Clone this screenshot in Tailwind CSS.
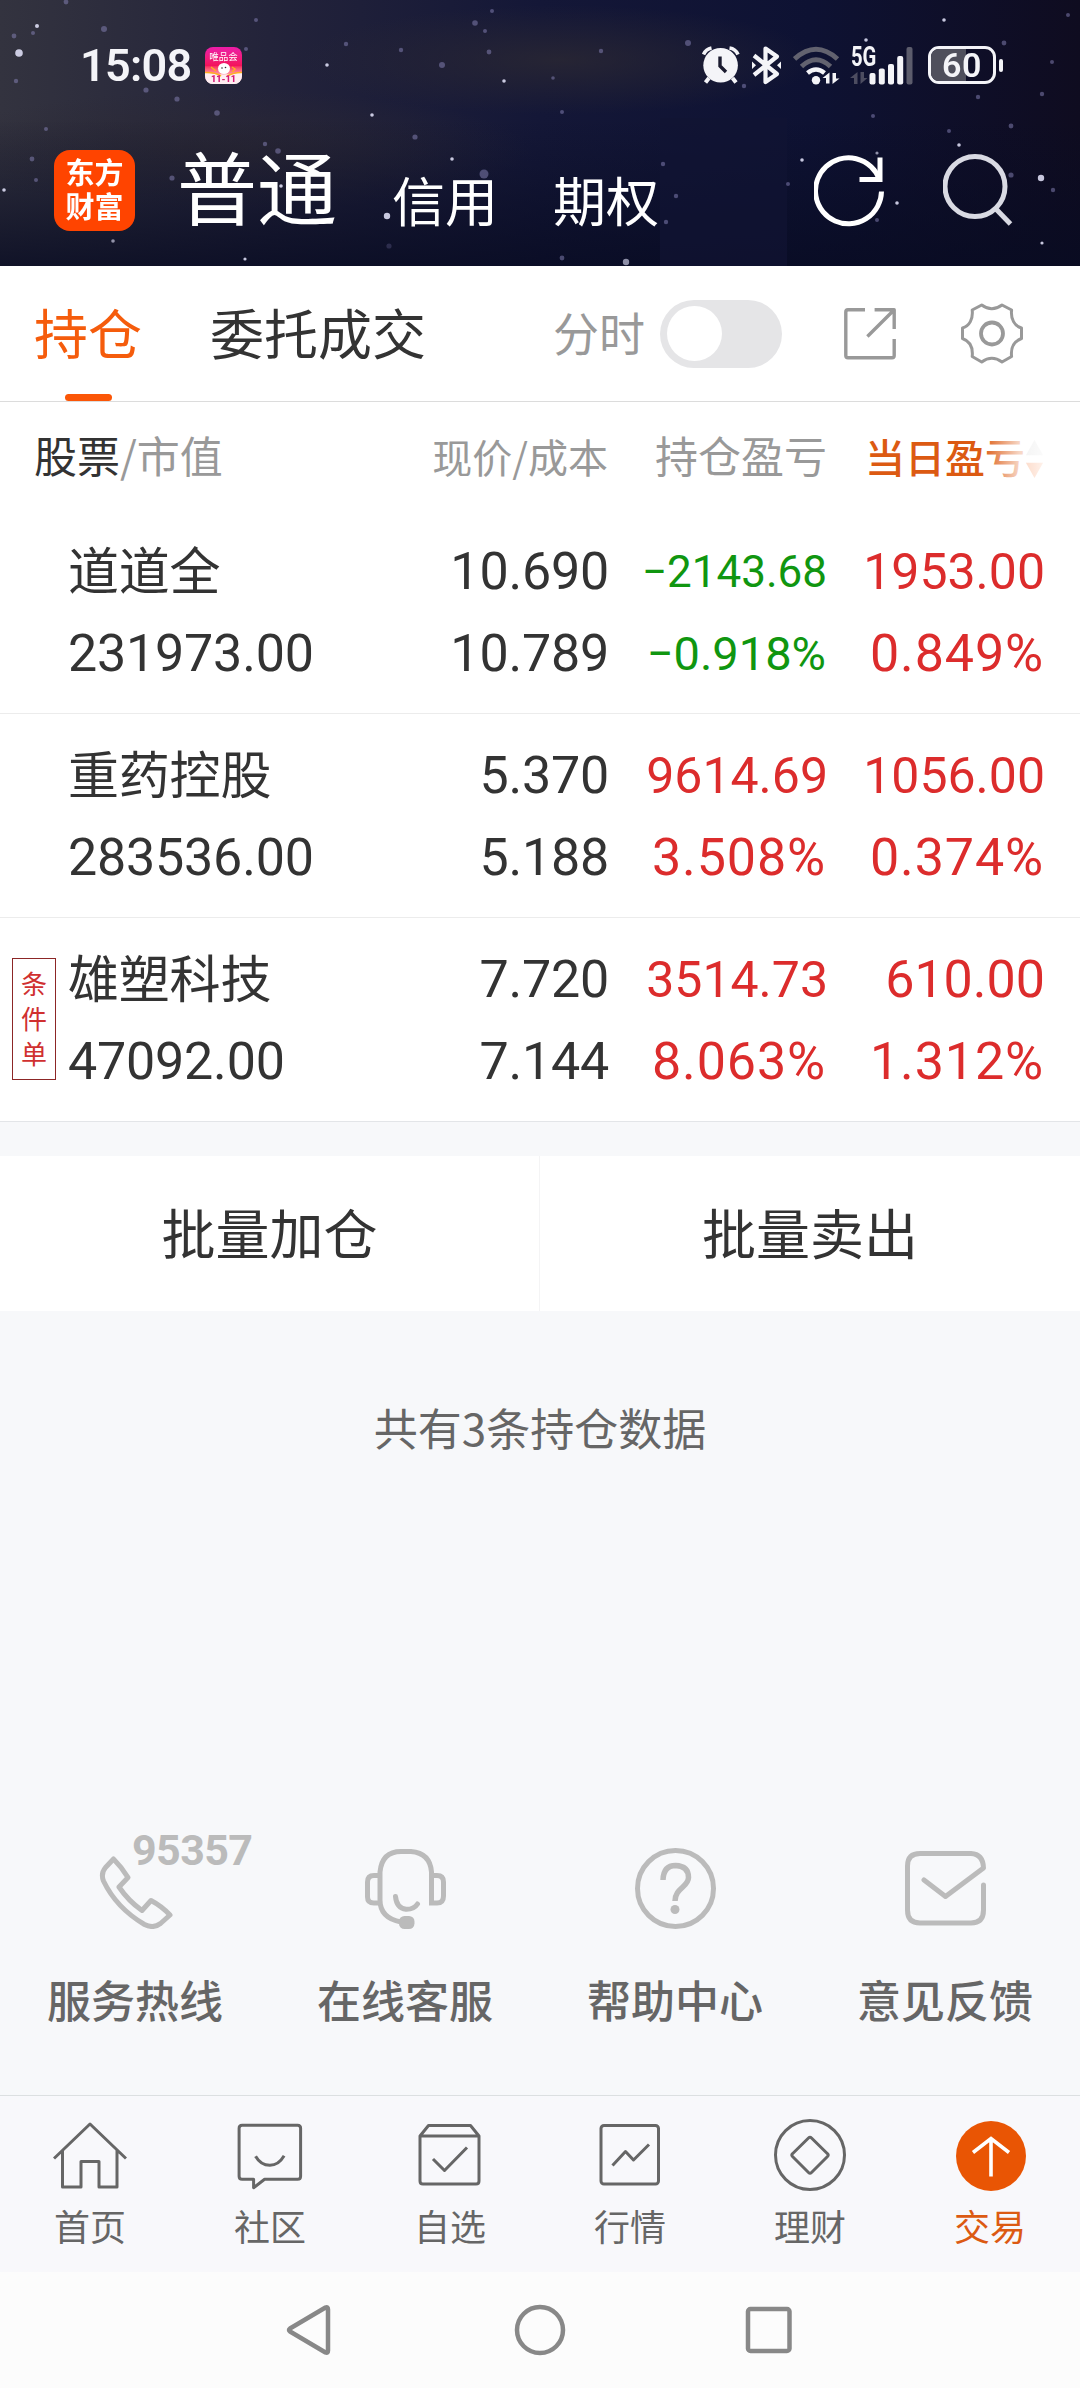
<!DOCTYPE html>
<html lang="zh-CN">
<head>
    <meta charset="UTF-8">
    <meta name="viewport" content="width=device-width, initial-scale=1.0">
    <title>持仓 - 东方财富</title>
    <script src="https://cdn.jsdelivr.net/npm/@tailwindcss/browser@4"></script>
</head>
<body class="w-[1080px] h-[2388px] bg-[#f7f8fa] text-[#333] font-['Noto_Sans_CJK_SC',sans-serif] overflow-hidden flex flex-col">

    <!-- Header -->
    <header class="relative h-[266px] shrink-0 overflow-hidden bg-[#12142c] text-white">
        <!-- Night sky -->
        <svg class="absolute inset-0" width="1080" height="266" viewBox="0 0 1080 266">
            <defs>
                <linearGradient id="sky" x1="0" y1="0" x2="1" y2="0">
                    <stop offset="0" stop-color="#33333f"/>
                    <stop offset="0.25" stop-color="#23233a"/>
                    <stop offset="0.5" stop-color="#141737"/>
                    <stop offset="0.75" stop-color="#0e1233"/>
                    <stop offset="1" stop-color="#0f0c20"/>
                </linearGradient>
                <linearGradient id="fade" x1="0" y1="0" x2="0" y2="1">
                    <stop offset="0.45" stop-color="#080b22" stop-opacity="0"/>
                    <stop offset="1" stop-color="#080b22" stop-opacity="0.8"/>
                </linearGradient>
                <radialGradient id="haze">
                    <stop offset="0" stop-color="#2b2833" stop-opacity="0.8"/>
                    <stop offset="1" stop-color="#2b2833" stop-opacity="0"/>
                </radialGradient>
            </defs>
            <rect width="1080" height="266" fill="url(#sky)"/>
            <ellipse cx="560" cy="60" rx="260" ry="55" fill="url(#haze)"/>
            <ellipse cx="230" cy="150" rx="300" ry="60" fill="url(#haze)"/>
            <rect width="1080" height="266" fill="url(#fade)"/>
            <rect x="660" y="118" width="127" height="148" fill="#111433" opacity="0.7"/>
            <g fill="#e8e8ff" opacity="0.85">
                <circle cx="19" cy="53" r="3.8"/><circle cx="37" cy="26" r="2"/><circle cx="327" cy="65" r="1.8"/><circle cx="372" cy="115" r="1.8"/>
                <circle cx="504" cy="81" r="1.8"/><circle cx="452" cy="159" r="1.8"/><circle cx="387" cy="216" r="3.2"/><circle cx="4" cy="190" r="1.8"/>
                <circle cx="245" cy="259" r="1.6"/><circle cx="281" cy="186" r="1.8"/><circle cx="944" cy="20" r="1.8"/><circle cx="866" cy="40" r="1.8"/>
                <circle cx="959" cy="145" r="1.8"/><circle cx="802" cy="160" r="1.8"/><circle cx="897" cy="203" r="1.8"/><circle cx="1041" cy="178" r="3.2"/>
                <circle cx="1042" cy="243" r="1.6"/><circle cx="626" cy="262" r="3.2" opacity="0.7"/><circle cx="113" cy="241" r="1.8" opacity="0.7"/><circle cx="877" cy="153" r="1.6" opacity="0.7"/>
            </g>
            <g fill="#8a86bb" opacity="0.5">
                <circle cx="14" cy="36" r="2.4"/><circle cx="33" cy="33" r="2"/><circle cx="66" cy="2" r="2.4"/><circle cx="104" cy="29" r="3"/>
                <circle cx="16" cy="81" r="2.2"/><circle cx="146" cy="90" r="2.6"/><circle cx="177" cy="99" r="2.6"/><circle cx="217" cy="113" r="2.8"/>
                <circle cx="46" cy="129" r="2"/><circle cx="32" cy="159" r="2.4"/><circle cx="36" cy="180" r="2"/><circle cx="172" cy="178" r="2.6"/>
                <circle cx="265" cy="144" r="2.2"/><circle cx="278" cy="151" r="2.8"/><circle cx="256" cy="20" r="2"/><circle cx="246" cy="49" r="2"/>
                <circle cx="346" cy="44" r="2.2"/><circle cx="401" cy="50" r="2.2"/><circle cx="442" cy="65" r="3"/><circle cx="475" cy="23" r="2.8"/>
                <circle cx="489" cy="52" r="2.4"/><circle cx="492" cy="11" r="2"/><circle cx="485" cy="31" r="2"/><circle cx="415" cy="137" r="2.6"/>
                <circle cx="484" cy="174" r="4.5"/><circle cx="389" cy="246" r="2.6" opacity="0.5"/><circle cx="688" cy="43" r="3"/><circle cx="601" cy="51" r="2.2"/>
                <circle cx="553" cy="78" r="1.8"/><circle cx="744" cy="86" r="2.2"/><circle cx="562" cy="112" r="2"/><circle cx="663" cy="164" r="2.2"/>
                <circle cx="676" cy="196" r="2.2"/><circle cx="666" cy="222" r="2.2"/><circle cx="562" cy="258" r="2.4"/><circle cx="873" cy="116" r="2"/>
                <circle cx="1004" cy="43" r="2.4"/><circle cx="1052" cy="62" r="2"/><circle cx="978" cy="97" r="2.2"/><circle cx="1042" cy="94" r="2.2"/>
                <circle cx="1011" cy="126" r="2.4"/><circle cx="1011" cy="175" r="2.6"/><circle cx="1053" cy="190" r="2.2"/><circle cx="1068" cy="15" r="2"/>
                <circle cx="877" cy="220" r="2"/><circle cx="949" cy="131" r="2"/><circle cx="788" cy="184" r="2"/>
            </g>
        </svg>

        <!-- Status bar -->
        <div class="relative h-[130px] flex items-center pl-[80px] pr-[77px] text-[#f4f4f8]">
            <span class="font-['Roboto'] font-semibold text-[45px] leading-none tracking-[-0.7px] w-[125px]">15:08</span>
            <div class="relative w-[37px] h-[37px] mt-[1px] rounded-[8px] overflow-hidden bg-linear-to-b from-[#ec1ca8] via-[#f4125c] to-[#fff0f4] flex flex-col items-center">
                <span class="text-[9.5px] leading-[10px] mt-[4px] text-white whitespace-nowrap">唯品会</span>
                <svg class="absolute left-0 top-[14px]" width="37" height="23" viewBox="0 0 37 23">
                    <path d="M0 11Q18 16 37 11V23H0Z" fill="#ffeef2"/>
                    <path d="M0 11.5Q10 11 16 15M37 11.5Q30 11 22 15" stroke="#ffb020" stroke-width="1.6" fill="none"/>
                    <ellipse cx="19" cy="7.5" rx="6" ry="5.5" fill="#fff"/>
                    <circle cx="17" cy="7" r="0.8" fill="#333"/><circle cx="20.5" cy="6.5" r="0.8" fill="#333"/>
                    <path d="M6 6l5 4M27 6l3 2-3 3" stroke="#ffb020" stroke-width="1.5" fill="none"/>
                </svg>
                <span class="absolute bottom-0 text-[9px] leading-[9px] font-['Roboto'] font-black text-[#d61a78]">11-11</span>
            </div>
            <div class="ml-auto flex items-center">
                <!-- alarm -->
                <svg width="38" height="39" viewBox="0 0 38 39" fill="none">
                    <circle cx="18.6" cy="19.3" r="17.3" fill="#f4f4f8"/>
                    <path d="M1.5 8.5A11 11 0 0 1 9.5 2M27.5 2a11 11 0 0 1 8.5 6.5" stroke="#f4f4f8" stroke-width="3.6"/>
                    <path d="M7 32l-3.5 4.5M30.5 32l3.5 4.5" stroke="#f4f4f8" stroke-width="4"/>
                    <path d="M18 10.5v9.5l6 6" stroke="#1b1b30" stroke-width="3.4"/>
                </svg>
                <!-- bluetooth -->
                <svg class="ml-[12px]" width="30" height="39" viewBox="0 0 30 39" fill="none" stroke="#f4f4f8" stroke-width="4.2" stroke-linejoin="round">
                    <path d="M2 9.5L25 28 13.5 36V2.5L25 10.5 2 29"/>
                    <path d="M0 15.5l4 3.7-4 3.8zM29 15.5l-4 3.7 4 3.8z" fill="#f4f4f8" stroke="none"/>
                </svg>
                <!-- wifi -->
                <svg class="ml-[11px]" width="48" height="39" viewBox="0 0 48 39" fill="none">
                    <path d="M1.5 13Q23 -6.500 44.5 13" stroke="#62626f" stroke-width="5"/>
                    <path d="M8.5 20.5Q23 7 37.5 20.5" stroke="#62626f" stroke-width="5"/>
                    <path d="M14.5 27Q23 20 31.5 27" stroke="#f4f4f8" stroke-width="4.5"/>
                    <circle cx="23" cy="34.3" r="4.2" fill="#f4f4f8"/>
                    <path d="M36.5 26.5v11h-3.500v-5.500h-3.500zM39.5 38v-11h3.500v5.500h3.500z" fill="#f4f4f8"/>
                </svg>
                <!-- signal -->
                <div class="relative ml-[9px] w-[64px] h-[39px]">
                    <span class="absolute left-[1px] top-[-3px] font-['Roboto'] font-bold text-[27px] leading-[28px] origin-left scale-x-75">5G</span>
                    <svg class="absolute inset-0" width="64" height="39" viewBox="0 0 64 39">
                        <path d="M7.5 26v12H4v-6H0zM10.5 38V26H14v6h3.500z" fill="#4c4c60"/>
                        <g fill="#f4f4f8">
                            <rect x="19.5" y="27" width="6" height="11.5" rx="2"/>
                            <rect x="28.8" y="22.5" width="6" height="16" rx="2"/>
                            <rect x="38" y="18" width="6" height="20.5" rx="2"/>
                            <rect x="47.2" y="10" width="6" height="28.5" rx="2"/>
                        </g>
                        <rect x="56.5" y="1" width="6" height="37.5" rx="2" fill="#5c5c6c"/>
                    </svg>
                </div>
                <!-- battery -->
                <div class="relative ml-[14px] w-[68px] h-[38px] rounded-[11px] border-[3.5px] border-[#f4f4f8] overflow-hidden flex items-center justify-center">
                    <div class="absolute left-0 top-0 w-[35px] h-full bg-[#4f4f5c]"></div>
                    <span class="relative font-['Roboto'] font-semibold text-[34px] leading-none tracking-[0.5px]">60</span>
                </div>
                <div class="ml-[3px] w-[4px] h-[13px] rounded-[2px] bg-[#f4f4f8]"></div>
            </div>
        </div>

        <!-- Account tabs -->
        <div class="relative h-[120px] flex items-center pl-[54px] pr-[67px]">
            <div class="w-[81px] h-[81px] rounded-[16px] bg-[#ff4400] flex items-center justify-center text-[29px] leading-[34px] font-bold">
                <div class="mt-[-4px]">东方<br>财富</div>
            </div>
            <span class="ml-[42px] mt-[-13px] text-[80px] leading-none">普通</span>
            <span class="ml-[55px] mt-[18px] text-[53px] leading-none">信用</span>
            <span class="ml-[55px] mt-[18px] text-[53px] leading-none">期权</span>
            <svg class="ml-auto mt-[2px]" width="71" height="72" viewBox="0 0 71 72" fill="none" stroke="#fff" stroke-width="5">
                <path d="M67.5 36.5A33 33 0 1 1 65.5 24.5"/>
                <path d="M66 2.5V24.5H45.5"/>
            </svg>
            <svg class="ml-[58px]" width="70" height="72" viewBox="0 0 70 72" fill="none" stroke="#d9dae3" stroke-width="5">
                <circle cx="32" cy="32.5" r="30"/>
                <path d="M52.5 54.5L67.5 70"/>
            </svg>
        </div>
    </header>

    <!-- Page tabs -->
    <nav class="h-[136px] shrink-0 bg-white border-b border-[#dcdcdc] flex items-center pl-[34px] pr-[57px]">
        <div class="relative h-full flex items-center text-[54px] leading-none text-[#f55c0c]">
            <span class="mt-[-4px]">持仓</span>
            <div class="absolute left-[31px] bottom-0 w-[47px] h-[7px] rounded-full bg-[#fb5607]"></div>
        </div>
        <span class="ml-[68px] mt-[-4px] text-[54px] leading-none">委托成交</span>
        <span class="ml-auto mt-[-5px] text-[46px] leading-none text-[#999]">分时</span>
        <div class="ml-[15px] w-[122px] h-[68px] rounded-full bg-[#e5e5e7] flex items-center pl-[7px]">
            <div class="w-[55px] h-[55px] rounded-full bg-white"></div>
        </div>
        <svg class="ml-[62px]" width="53" height="52" viewBox="0 0 53 52" fill="none" stroke="#999" stroke-width="3.4" stroke-linejoin="round">
            <path d="M21 1.8H4Q1.8 1.8 1.8 4V47.5Q1.8 49.7 4 49.7H48Q50.2 49.7 50.2 47.5V31"/>
            <path d="M30.6 1.8H50.2V21M23.4 28.5L49.5 2.5"/>
        </svg>
        <svg class="ml-[64px]" width="62" height="61" viewBox="0 0 62 61" fill="none" stroke="#999" stroke-width="3" stroke-linejoin="round">
            <path d="M20.7 2Q30.8 9.5 41 2L50.6 7C49.5 16 53.5 23 60.5 25V35.5C53.5 38 49.5 44 50.6 53.5L41 59Q30.8 51.5 20.7 59L11.2 53.5C12.2 44 8.5 38 1.5 35.5V25C8.5 23 12.2 16 11.2 7Z"/>
            <circle cx="31" cy="30.5" r="11" stroke-width="3.8"/>
        </svg>
    </nav>

    <!-- Holdings -->
    <section class="bg-white shrink-0">
        <div class="h-[108px] grid grid-cols-[608px_219px_217px] items-center text-right leading-none text-[#999]">
            <div class="flex justify-between items-center pl-[34px]">
                <span class="text-[43px] mt-[-4px]"><span class="text-[#333]">股票</span>/市值</span>
                <span class="text-[40px]">现价/成本</span>
            </div>
            <div class="text-[43px] mt-[-4px]">持仓盈亏</div>
            <div class="relative flex items-center justify-end">
                <span class="text-[40px] font-medium text-[#dc5a12]">当日盈亏</span>
                <svg class="mt-[6px]" width="19" height="40" viewBox="0 0 20 40">
                    <path d="M10 0L19 16H1Z" fill="#ccc"/>
                    <path d="M10 40L19 24H1Z" fill="#f55c0c"/>
                </svg>
                <div class="absolute right-0 top-[-4px] w-[62px] h-[56px] bg-linear-to-r from-white/0 via-white/75 via-60% to-white/92"></div>
            </div>
        </div>

        <div class="h-[204px] grid grid-cols-[609px_219px_217px] pt-[21px] border-b border-[#ececec] font-['Roboto','Noto_Sans_CJK_SC',sans-serif] text-[52px] leading-[82px] text-right">
            <div class="pl-[68px] h-[164px] tracking-[-0.2px]">
                <div class="flex justify-between h-[82px]"><span class="text-[51px] font-['Noto_Sans_CJK_SC'] mt-[-4px]">道道全</span><span>10.690</span></div>
                <div class="flex justify-between h-[82px]"><span>231973.00</span><span>10.789</span></div>
            </div>
            <div class="text-[#109610]">
                <div class="h-[82px] text-[44px] pr-[1px]">−2143.68</div>
                <div class="h-[82px] text-[47px] pr-[2px]">−0.918%</div>
            </div>
            <div class="text-[#dc2c2c]">
                <div class="h-[82px] text-[50px]">1953.00</div>
                <div class="h-[82px] tracking-[0.9px] pr-[1px]">0.849%</div>
            </div>
        </div>

        <div class="h-[204px] grid grid-cols-[609px_219px_217px] pt-[21px] border-b border-[#ececec] font-['Roboto','Noto_Sans_CJK_SC',sans-serif] text-[52px] leading-[82px] text-right">
            <div class="pl-[68px] h-[164px] tracking-[-0.2px]">
                <div class="flex justify-between h-[82px]"><span class="text-[51px] font-['Noto_Sans_CJK_SC'] mt-[-4px]">重药控股</span><span>5.370</span></div>
                <div class="flex justify-between h-[82px]"><span>283536.00</span><span>5.188</span></div>
            </div>
            <div class="text-[#dc2c2c]">
                <div class="h-[82px] text-[50px]">9614.69</div>
                <div class="h-[82px] tracking-[0.9px] pr-[2px]">3.508%</div>
            </div>
            <div class="text-[#dc2c2c]">
                <div class="h-[82px] text-[50px]">1056.00</div>
                <div class="h-[82px] tracking-[0.9px] pr-[1px]">0.374%</div>
            </div>
        </div>

        <div class="relative h-[204px] grid grid-cols-[609px_219px_217px] pt-[21px] border-b border-[#e3e5e8] font-['Roboto','Noto_Sans_CJK_SC',sans-serif] text-[52px] leading-[82px] text-right">
            <!-- conditional order tag -->
            <div class="absolute left-[12px] top-[40px] w-[44px] h-[122px] border border-[#8c2626] flex flex-col items-center pt-[6px] font-['Noto_Sans_CJK_SC'] text-[26px] leading-[35px] text-[#d03030]">
                <span>条</span><span>件</span><span>单</span>
            </div>
            <div class="pl-[68px] h-[164px] tracking-[-0.2px]">
                <div class="flex justify-between h-[82px]"><span class="text-[51px] font-['Noto_Sans_CJK_SC'] mt-[-4px]">雄塑科技</span><span>7.720</span></div>
                <div class="flex justify-between h-[82px]"><span>47092.00</span><span>7.144</span></div>
            </div>
            <div class="text-[#dc2c2c]">
                <div class="h-[82px] text-[50px]">3514.73</div>
                <div class="h-[82px] tracking-[0.9px] pr-[2px]">8.063%</div>
            </div>
            <div class="text-[#dc2c2c]">
                <div class="h-[82px]">610.00</div>
                <div class="h-[82px] tracking-[0.9px] pr-[1px]">1.312%</div>
            </div>
        </div>
    </section>

    <!-- Batch actions -->
    <section class="mt-[34px] h-[155px] shrink-0 bg-white grid grid-cols-2 text-[54px] leading-none text-center">
        <button class="border-r border-[#f4f4f5] pb-[3px]">批量加仓</button>
        <button class="pb-[3px]">批量卖出</button>
    </section>

    <p class="mt-[94px] text-center text-[44px] leading-[44px] text-[#666]">共有3条持仓数据</p>

    <!-- Services -->
    <section class="mt-auto mb-[74px] grid grid-cols-4 text-center text-[44px] font-medium leading-none text-[#666]">
        <div class="relative flex flex-col items-center">
            <svg width="81" height="81" viewBox="-4.5 -8 81 81" fill="none" stroke="#bbb" stroke-width="5" stroke-linejoin="round">
                <path d="M14 3Q22.5 11.5 28.5 21.5L19.5 31Q29 45 42.5 54.5L51.5 44.5Q62 50 70.5 59L61 67.5Q54 73 45 68.5Q17 52 4 25Q1 17.5 6 11.5Z"/>
            </svg>
            <span class="absolute left-[132px] top-[-20px] font-['Roboto'] font-bold text-[43px] leading-[44px] tracking-[-0.6px] text-[#bbb]">95357</span>
            <span class="mt-[48px]">服务热线</span>
        </div>
        <div class="flex flex-col items-center">
            <svg width="81" height="81" viewBox="0 -1 81 81" fill="none" stroke="#bbb" stroke-width="5" stroke-linecap="round">
                <path d="M36 73Q15 69 15 51V23Q17 2.5 36 2.5H46Q65 4 66.5 23V54H72Q78.5 54 78.5 47V33Q78.5 26.5 72 26.5H68"/>
                <path d="M14 26.5H9Q2.5 26.5 2.5 33V48Q2.5 54 9 54H14"/>
                <path d="M30.5 47.5Q31.5 59 41 60.3Q49 60.5 52.5 55"/>
                <rect x="34" y="67" width="15.5" height="13" rx="5.5" fill="#bbb" stroke="none"/>
            </svg>
            <span class="mt-[48px]">在线客服</span>
        </div>
        <div class="flex flex-col items-center">
            <svg width="81" height="81" viewBox="0 0 81 81" fill="none" stroke="#bbb" stroke-width="5">
                <circle cx="40.5" cy="40.5" r="38"/>
                <path d="M28 32Q28.5 17.5 40.5 17.5Q53.5 18 53.5 29.5C53.5 39 40 40 40 53" stroke-width="5.5"/>
                <circle cx="40" cy="61.5" r="4.5" fill="#bbb" stroke="none"/>
            </svg>
            <span class="mt-[48px]">帮助中心</span>
        </div>
        <div class="flex flex-col items-center">
            <svg width="81" height="81" viewBox="0 -3 81 81" fill="none" stroke="#bbb" stroke-width="5" stroke-linecap="round" stroke-linejoin="round">
                <path d="M78.5 34V59Q78.5 72 66 72H15Q2.5 72 2.5 59V15Q2.5 2.5 15 2.5H66Q78 3 78.5 17L40.5 45.5L19 29"/>
            </svg>
            <span class="mt-[48px]">意见反馈</span>
        </div>
    </section>

    <!-- Tab bar -->
    <nav class="h-[177px] shrink-0 bg-[#f8f8fb] border-t border-[#dcdfe1] grid grid-cols-6 pt-[23px] text-[36px] leading-none text-[#666]">
        <div class="flex flex-col items-center">
            <svg width="74" height="72" viewBox="0 -3 74 72" fill="none" stroke="#666" stroke-width="3" stroke-linejoin="round">
                <path d="M1 36.5L37 2L73 36.5M9.5 28V65H28V39.5H46V65H64V28"/>
            </svg>
            <span class="mt-[16px]">首页</span>
        </div>
        <div class="flex flex-col items-center">
            <svg width="74" height="72" viewBox="-4.6 -4.7 74 72" fill="none" stroke="#666" stroke-width="3" stroke-linejoin="round">
                <path d="M4.5 1.5H60Q63 1.5 63 4.5V52.5Q63 55.5 60 55.5H27L16 64V55.5H4.5Q1.5 55.5 1.5 52.5V4.5Q1.5 1.5 4.5 1.5Z"/>
                <path d="M18 32.5Q23 41.5 32.3 41.5Q41 41.5 46.5 32"/>
            </svg>
            <span class="mt-[16px]">社区</span>
        </div>
        <div class="flex flex-col items-center">
            <svg width="74" height="72" viewBox="-5.5 -5 74 72" fill="none" stroke="#666" stroke-width="3" stroke-linejoin="round">
                <path d="M1.5 12L10 1.5H52L60.5 12V57Q60.5 60 57.5 60H4.5Q1.5 60 1.5 57ZH60.5"/>
                <path d="M14.5 35L26 46.5L48.5 23.5"/>
            </svg>
            <span class="mt-[16px]">自选</span>
        </div>
        <div class="flex flex-col items-center">
            <svg width="74" height="72" viewBox="-6.5 -5 74 72" fill="none" stroke="#666" stroke-width="3" stroke-linejoin="round">
                <rect x="1.5" y="1.5" width="57.5" height="58.5" rx="3"/>
                <path d="M13 41.5L26 27.5L34 36L49.5 20.5"/>
            </svg>
            <span class="mt-[16px]">行情</span>
        </div>
        <div class="flex flex-col items-center">
            <svg width="74" height="72" viewBox="-1 0 74 72" fill="none" stroke="#666" stroke-width="3" stroke-linejoin="round">
                <circle cx="36" cy="36" r="34.5"/>
                <path d="M34.5 19Q36 17.5 37.5 19L53.5 34.7Q55 36 53.5 37.5L37.5 53.5Q36 55 34.5 53.5L18.5 37.5Q17 36 18.5 34.7Z"/>
            </svg>
            <span class="mt-[16px]">理财</span>
        </div>
        <div class="flex flex-col items-center text-[#dc5a12]">
            <svg width="74" height="72" viewBox="-3 -2 74 72" fill="none" stroke="#fff" stroke-width="3.6">
                <circle cx="35" cy="35" r="35" fill="#e95504" stroke="none"/>
                <path d="M35 55.5V17M17 31.5L35 17.5L53 31.5"/>
            </svg>
            <span class="mt-[16px]">交易</span>
        </div>
    </nav>

    <!-- System navigation -->
    <div class="h-[116px] shrink-0 bg-[#fcfcfc] flex items-center pl-[286px] pr-[287px] justify-between">
        <svg width="46" height="52" viewBox="0 0 46 52" fill="none" stroke="#888" stroke-width="4.5" stroke-linejoin="round">
            <path d="M39.5 3.5Q42 2.5 42 5.5V46.5Q42 49.5 39.5 48.5L4 27.5Q2 26 4 24.5Z"/>
        </svg>
        <svg class="ml-[3px]" width="52" height="52" viewBox="0 0 52 52" fill="none" stroke="#888" stroke-width="4.5">
            <circle cx="26" cy="26" r="23"/>
        </svg>
        <svg width="48" height="48" viewBox="0 0 48 48" fill="none" stroke="#888" stroke-width="4.5">
            <rect x="3" y="3" width="41.5" height="42" rx="2.5"/>
        </svg>
    </div>
</body>
</html>
